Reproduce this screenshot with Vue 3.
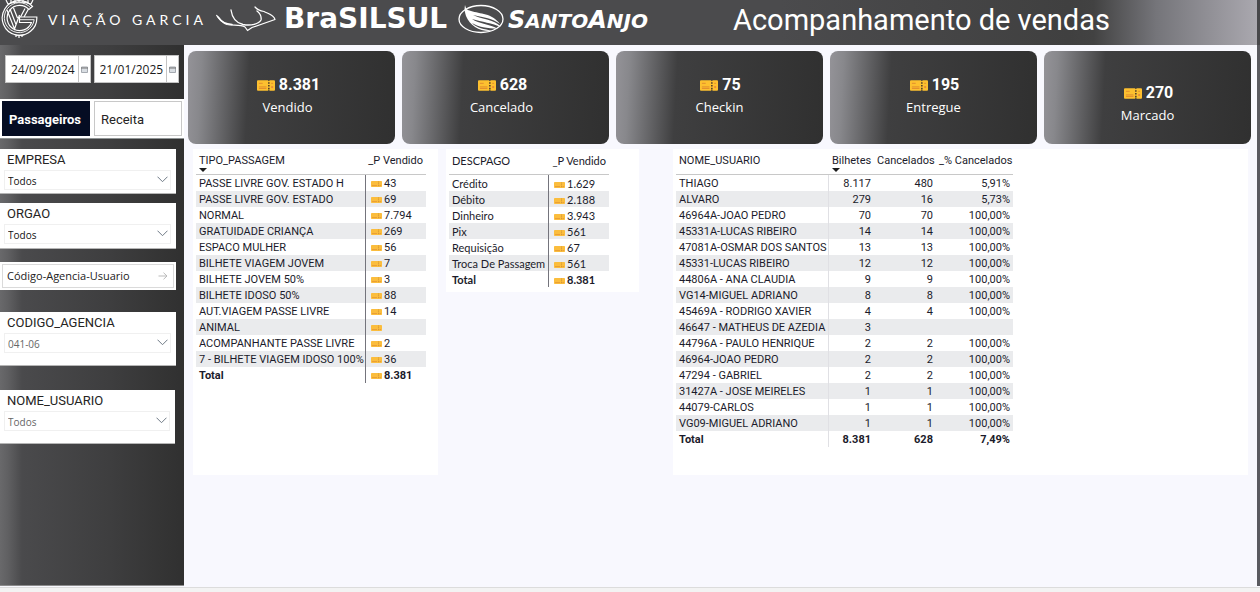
<script setup>
import { ref, h } from 'vue'

const startDate = ref('24/09/2024')
const endDate = ref('21/01/2025')
const metric = ref('Passageiros')
const metrics = ['Passageiros', 'Receita']

const filters = ref([
  { id: 'empresa', title: 'EMPRESA', value: 'Todos', kind: 'first' },
  { id: 'orgao', title: 'ORGAO', value: 'Todos', kind: 'second' },
])
const lowerFilters = ref([
  { id: 'agencia', title: 'CODIGO_AGENCIA', value: '041-06', kind: 'agency' },
  { id: 'usuario', title: 'NOME_USUARIO', value: 'Todos', kind: 'user' },
])

const cards = [
  { label: 'Vendido', value: '8.381', kind: 'shifted' },
  { label: 'Cancelado', value: '628', kind: 'shifted' },
  { label: 'Checkin', value: '75', kind: '' },
  { label: 'Entregue', value: '195', kind: '' },
  { label: 'Marcado', value: '270', kind: 'low' },
]

const ticketTypes = [
  ['PASSE LIVRE GOV. ESTADO H', '43'],
  ['PASSE LIVRE GOV. ESTADO', '69'],
  ['NORMAL', '7.794'],
  ['GRATUIDADE CRIANÇA', '269'],
  ['ESPACO MULHER', '56'],
  ['BILHETE VIAGEM JOVEM', '7'],
  ['BILHETE JOVEM 50%', '3'],
  ['BILHETE IDOSO 50%', '88'],
  ['AUT.VIAGEM PASSE LIVRE', '14'],
  ['ANIMAL', ''],
  ['ACOMPANHANTE PASSE LIVRE', '2'],
  ['7 - BILHETE VIAGEM IDOSO 100%', '36'],
]

const payments = [
  ['Crédito', '1.629'],
  ['Débito', '2.188'],
  ['Dinheiro', '3.943'],
  ['Pix', '561'],
  ['Requisição', '67'],
  ['Troca De Passagem', '561'],
]

const users = [
  ['THIAGO', '8.117', '480', '5,91%'],
  ['ALVARO', '279', '16', '5,73%'],
  ['46964A-JOAO PEDRO', '70', '70', '100,00%'],
  ['45331A-LUCAS RIBEIRO', '14', '14', '100,00%'],
  ['47081A-OSMAR DOS SANTOS', '13', '13', '100,00%'],
  ['45331-LUCAS RIBEIRO', '12', '12', '100,00%'],
  ['44806A - ANA CLAUDIA', '9', '9', '100,00%'],
  ['VG14-MIGUEL ADRIANO', '8', '8', '100,00%'],
  ['45469A - RODRIGO XAVIER', '4', '4', '100,00%'],
  ['46647 - MATHEUS DE AZEDIA', '3', '', ''],
  ['44796A - PAULO HENRIQUE', '2', '2', '100,00%'],
  ['46964-JOAO PEDRO', '2', '2', '100,00%'],
  ['47294 - GABRIEL', '2', '2', '100,00%'],
  ['31427A - JOSE MEIRELES', '1', '1', '100,00%'],
  ['44079-CARLOS', '1', '1', '100,00%'],
  ['VG09-MIGUEL ADRIANO', '1', '1', '100,00%'],
]

const TicketIcon = () =>
  h('svg', { viewBox: '0 0 19 11', 'aria-hidden': 'true' }, [
    h('path', { d: 'M1 0H11.5L12.5 1L13.5 0H18Q19 0 19 1V10Q19 11 18 11H13.5L12.5 10L11.5 11H1Q0 11 0 10V1Q0 0 1 0Z', fill: '#fdc02f' }),
    h('path', { d: 'M2 3.2H6M2 7H10M2 8.6H10M15 3.2H17', stroke: '#e08a2e', 'stroke-width': '1', fill: 'none' }),
    h('path', { d: 'M12.5 2V10', stroke: '#4a3a28', 'stroke-width': '1.6', 'stroke-dasharray': '1.6 1.4', fill: 'none' }),
    h('circle', { cx: '16', cy: '7.2', r: '1.2', fill: '#e8893b' }),
  ])

const SmallTicket = () =>
  h('svg', { viewBox: '0 0 11 6', 'aria-hidden': 'true' }, [
    h('rect', { width: '11', height: '6', rx: '.7', fill: '#fbbd3d' }),
    h('path', { d: 'M1 4.500H6M8.500 4.500H10', stroke: '#eb9f35', fill: 'none' }),
    h('path', { d: 'M7.500 .5V5.500', stroke: '#c98a35', 'stroke-width': '.8', 'stroke-dasharray': '1 .8', fill: 'none' }),
  ])
</script>

<template>
  <div class="shell">
    <header class="topbar">
      <svg class="crest" viewBox="0 0 38 38" aria-hidden="true">
        <g fill="none" stroke="#fff">
          <path d="M32.500 6.500A17.300 17.300 0 1 0 36.800 17H19.500V22.500H31.500A12.600 12.600 0 1 1 29 9.500Z" stroke-width="1.200" />
          <path d="M30.800 8A15 15 0 1 0 34.200 19.700H20" stroke-width=".9" />
          <path d="M7 10L14.500 29L19.500 15M10 9L15.800 24M13.500 8L17.500 18M25 8.500L20.500 17M28.500 9L24 17" stroke-width="1.200" />
          <path d="M6 0L8 4M11 0V3M15 0V2M19 0V2M23 0V2M28 0V3M33 0L31 4M8 4Q19 0 31 4" stroke-width="1.200" />
          <path d="M14 34.500Q19 36 25 34.500M16 35V37M19 35.500V38M22 35V37" stroke-width="1.200" />
        </g>
      </svg>
      <span class="garcia">VIAÇÃO GARCIA</span>
      <svg class="swoosh" viewBox="0 0 60 26" aria-hidden="true">
        <g fill="none" stroke="#fff" stroke-linecap="round" stroke-linejoin="round">
          <path d="M.7 9.500C4 13 6 17 11 18.500C17 20 24 18 29 21L31.500 24.500L36 21.500L59 13.500C58 9 53 8 48 5.500Q42 4.500 39 1" stroke-width="1.200" />
          <path d="M15 4C16 11 20 17 27 18.500C35 20 43 18 45 14Q46 9 41 5" stroke-width="1.300" />
          <path d="M2 11C6 17 10 18 16 18.500" stroke-width="1.600" />
        </g>
      </svg>
      <span class="brasilsul">BraSILSUL</span>
      <svg class="wing" viewBox="0 0 46 30" aria-hidden="true">
        <ellipse cx="23" cy="15" rx="22" ry="13.500" fill="none" stroke="#fff" stroke-width="1.300" />
        <path fill="#fff" d="M7 1C8 5 9 6 13 7C22 10 34 9 42 20C34 14 24 13 15 11C22 15 36 15 43 23C34 19 24 18 14 15C21 20 32 20 40 25C29 24 20 23 14 19C18 24 27 25 34 27C22 28 12 22 8 12C7 9 6 5 7 1Z" />
      </svg>
      <span class="santoanjo"><b>S</b>anto<b>A</b>njo</span>
      <h1>Acompanhamento de vendas</h1>
    </header>

    <div class="body">
      <aside class="sidebar">
        <div class="dates">
          <div class="date">
            <input v-model="startDate" type="text" aria-label="Data inicial" />
            <button type="button" aria-label="Abrir calendário inicial">
              <svg viewBox="0 0 7 7"><path d="M.5 1H6.500V6.500H.5Z" fill="#d8dde2" stroke="#a4a9b0" /><path d="M0 2H7" stroke="#777" /></svg>
            </button>
          </div>
          <div class="date">
            <input v-model="endDate" type="text" aria-label="Data final" />
            <button type="button" aria-label="Abrir calendário final">
              <svg viewBox="0 0 7 7"><path d="M.5 1H6.500V6.500H.5Z" fill="#d8dde2" stroke="#a4a9b0" /><path d="M0 2H7" stroke="#777" /></svg>
            </button>
          </div>
        </div>

        <div class="tabs">
          <button
            v-for="m in metrics"
            :key="m"
            type="button"
            :class="{ active: metric === m }"
            :aria-pressed="metric === m"
            @click="metric = m"
          >{{ m }}</button>
        </div>

        <div v-for="f in filters" :key="f.id" class="filter" :class="f.kind">
          <label :for="f.id">{{ f.title }}</label>
          <div class="pick">
            <select :id="f.id" v-model="f.value"><option>{{ f.value }}</option></select>
            <svg viewBox="0 0 11 7" aria-hidden="true"><path d="M.5.7L5.500 5.700L10.500.7" fill="none" stroke="#6f7a86" /></svg>
          </div>
        </div>

        <div class="search">
          <input type="text" aria-label="Código-Agencia-Usuario" placeholder="Código-Agencia-Usuario" />
          <button type="button" aria-label="Pesquisar">
            <svg viewBox="0 0 10 8"><path d="M.5 4H9M5.500.7L9 4L5.500 7.300" fill="none" stroke="#bbb" /></svg>
          </button>
        </div>

        <div v-for="f in lowerFilters" :key="f.id" class="filter" :class="f.kind">
          <label :for="f.id">{{ f.title }}</label>
          <div class="pick">
            <select :id="f.id" v-model="f.value"><option>{{ f.value }}</option></select>
            <svg viewBox="0 0 11 7" aria-hidden="true"><path d="M.5.7L5.500 5.700L10.500.7" fill="none" stroke="#6f7a86" /></svg>
          </div>
        </div>
      </aside>

      <main>
        <section class="cards">
          <article v-for="c in cards" :key="c.label" class="card" :class="c.kind">
            <div class="value"><TicketIcon class="ticket-lg" />{{ c.value }}</div>
            <div class="label">{{ c.label }}</div>
          </article>
        </section>

        <section class="panels">
          <div class="panel types">
            <table class="pair">
              <thead>
                <tr>
                  <th scope="col" aria-sort="descending">TIPO_PASSAGEM<svg class="sort" viewBox="0 0 8 4"><path d="M0 0H8L4 4Z" /></svg></th>
                  <th scope="col">_P Vendido</th>
                </tr>
              </thead>
              <tbody>
                <tr v-for="r in ticketTypes" :key="r[0]">
                  <td>{{ r[0] }}</td>
                  <td><SmallTicket class="ticket-sm" />{{ r[1] }}</td>
                </tr>
              </tbody>
              <tfoot>
                <tr><td>Total</td><td><SmallTicket class="ticket-sm" />8.381</td></tr>
              </tfoot>
            </table>
          </div>

          <div class="panel payments">
            <table class="pair">
              <thead>
                <tr><th scope="col">DESCPAGO</th><th scope="col">_P Vendido</th></tr>
              </thead>
              <tbody>
                <tr v-for="r in payments" :key="r[0]">
                  <td>{{ r[0] }}</td>
                  <td><SmallTicket class="ticket-sm" />{{ r[1] }}</td>
                </tr>
              </tbody>
              <tfoot>
                <tr><td>Total</td><td><SmallTicket class="ticket-sm" />8.381</td></tr>
              </tfoot>
            </table>
          </div>

          <div class="panel users">
            <table class="people">
              <thead>
                <tr>
                  <th scope="col">NOME_USUARIO</th>
                  <th scope="col" aria-sort="descending">Bilhetes<svg class="sort" viewBox="0 0 8 4"><path d="M0 0H8L4 4Z" /></svg></th>
                  <th scope="col">Cancelados</th>
                  <th scope="col">_% Cancelados</th>
                </tr>
              </thead>
              <tbody>
                <tr v-for="r in users" :key="r[0]">
                  <td v-for="(cell, i) in r" :key="i">{{ cell }}</td>
                </tr>
              </tbody>
              <tfoot>
                <tr><td>Total</td><td>8.381</td><td>628</td><td>7,49%</td></tr>
              </tfoot>
            </table>
          </div>
        </section>
      </main>
    </div>
    <footer class="statusbar"></footer>
  </div>
</template>

<style>
html,
body,
#app {
  height: 100%;
}
body {
  margin: 0;
}
</style>

<style scoped>
* {
  box-sizing: border-box;
}
.shell {
  min-height: 100%;
  display: flex;
  flex-direction: column;
  font-family: "Open Sans", "Noto Sans", sans-serif;
  font-size: 11px;
  color: #1b1b2b;
  background: #f8f8fe;
}
button,
input,
select {
  font: inherit;
  margin: 0;
  border-radius: 0;
}
svg {
  display: block;
  flex: none;
}

/* Header */
.topbar {
  display: flex;
  height: 45px;
  padding-bottom: 7px;
  align-items: center;
  color: #fff;
  white-space: nowrap;
  border-right: 3px solid #47474a;
  background: linear-gradient(90deg, #4b4b4d 0%, #4b4b4d 62%, #404040 85%, #424242 87%, #75757a 92%, #aaa8af 100%);
}
.crest {
  width: 38px;
  height: 38px;
}
.garcia {
  width: 168px;
  margin-left: 10px;
  font-family: Lato, sans-serif;
  font-size: 14px;
  letter-spacing: 4px;
}
.swoosh {
  width: 60px;
  height: 26px;
}
.brasilsul {
  width: 174px;
  margin-left: 8px;
  font: 700 28px/30px "DejaVu Sans", sans-serif;
}
.wing {
  width: 46px;
  height: 30px;
}
.santoanjo {
  width: 225px;
  margin-left: 4px;
  padding-top: 2px;
  font: italic 700 20px/30px "DejaVu Sans", sans-serif;
  text-transform: uppercase;
}
.santoanjo b {
  font-size: 24px;
}
h1 {
  margin: 0;
  padding-top: 2px;
  font: 400 29px/38px Roboto, sans-serif;
}

/* Body */
.body {
  flex: 1;
  display: flex;
  border-right: 3px solid #5a5a60;
}
.sidebar {
  width: 184px;
  flex: none;
  padding-top: 10px;
  border-bottom: 1px solid #8c8c8c;
  background: linear-gradient(90deg, #69696b 0, #606062 8px, #4a4a4c 22px, #3e3e3f 110px, #303030 100%);
}
.dates {
  display: flex;
  gap: 3px;
  padding: 0 5px;
}
.date {
  flex: 1;
  min-width: 0;
  display: flex;
  height: 28px;
  background: #fff;
  border: 1px solid #c4c4c4;
}
.date input {
  flex: 1;
  min-width: 0;
  padding: 0 0 0 5px;
  border: 0;
  background: none;
  font-size: 12px;
  color: #1b1b1b;
}
.date button {
  width: 12px;
  padding: 0 2px;
  border: 0;
  border-left: 1px solid #c4c4c4;
  background: none;
}
.date svg {
  width: 7px;
  height: 7px;
}
.tabs {
  display: flex;
  gap: 4px;
  margin-top: 16px;
  padding: 2px;
  background: #fff;
  border-bottom: 1px solid #8f9495;
}
.tabs button {
  flex: 1;
  height: 35px;
  padding: 2px 6px 0;
  text-align: left;
  border: 1px solid #c8c8c8;
  background: #fff;
  color: #252423;
  font: 400 13px/16px Roboto, sans-serif;
}
.tabs .active {
  background: #050d23;
  border-color: #050d23;
  color: #fff;
  font-weight: 700;
}
.filter {
  width: 176px;
  padding: 2px 5px 0 4px;
  background: #fff;
  border-bottom: 1px solid #b5b5b5;
}
.first {
  height: 45px;
  margin-top: 10px;
}
.second {
  height: 46px;
  margin-top: 9px;
}
.agency {
  height: 54px;
  margin-top: 22px;
}
.user {
  width: 175px;
  height: 54px;
  margin-top: 24px;
}
.filter label {
  display: block;
  padding-left: 3px;
  font: 400 13px/18px Roboto, sans-serif;
  color: #252423;
}
.pick {
  position: relative;
  margin-top: 1px;
}
.pick select {
  display: block;
  appearance: none;
  width: 100%;
  height: 20px;
  padding: 2px 20px 0 3px;
  border: 1px solid #f0f0f0;
  background: #fff;
  font-size: 10px;
  color: #111;
}
.agency select,
.user select {
  color: #666;
}
.pick svg {
  position: absolute;
  right: 3px;
  top: 6px;
  width: 11px;
  height: 7px;
  pointer-events: none;
}
.search {
  display: flex;
  width: 176px;
  height: 28px;
  margin-top: 13px;
  border: 2px solid #fff;
  background: #fff;
  box-shadow: inset 0 0 0 1px #dadada;
}
.search input {
  flex: 1;
  min-width: 0;
  padding: 0 0 2px 5px;
  border: 0;
  background: none;
}
.search input::placeholder {
  color: #222;
  opacity: 1;
}
.search button {
  width: 22px;
  padding: 0 6px;
  border: 0;
  background: none;
}
.search svg {
  width: 10px;
  height: 8px;
}

/* Cards */
main {
  flex: 1;
  min-width: 0;
}
.cards {
  display: grid;
  grid-template-columns: repeat(5, 1fr);
  gap: 7px;
  padding: 6px 6px 0 4px;
}
.card {
  height: 93px;
  padding-top: 20px;
  border-radius: 8px;
  text-align: center;
  color: #fff;
  background: linear-gradient(93deg, #949398 0, #88888c 14px, #3f3f40 62px, #303030 100%);
}
.shifted {
  padding-right: 8px;
}
.low {
  padding-top: 28px;
}
.value {
  display: flex;
  justify-content: center;
  align-items: center;
  gap: 4px;
  padding-left: 2px;
  font: 700 16px/28px Roboto, sans-serif;
}
.ticket-lg {
  width: 18px;
  height: 11px;
}
.label {
  font-size: 13px;
  line-height: 16px;
}

/* Tables */
.panels {
  display: flex;
  align-items: flex-start;
  padding: 5px 9px 0;
}
.panel {
  padding: 3px;
  background: #fff;
}
.types {
  width: 245px;
  padding-bottom: 92px;
}
.payments {
  width: 193px;
  margin-left: 8px;
  padding-bottom: 5px;
}
.users {
  flex: 1;
  margin-left: 34px;
  padding-bottom: 28px;
}
table {
  border-collapse: separate;
  border-spacing: 0;
  table-layout: fixed;
  white-space: nowrap;
  font-family: Roboto, "Open Sans", sans-serif;
}
th,
td {
  height: 16px;
  padding: 2px 3px 0;
  line-height: 14px;
  text-align: left;
}
th {
  height: 23px;
  font-weight: 400;
  vertical-align: top;
  border-bottom: 1px solid #c8c8c8;
}
.sort {
  width: 8px;
  height: 4px;
  fill: #1b1b1b;
}
.pair {
  width: 230px;
}
.payments .pair {
  width: 160px;
  font-family: Lato, "Open Sans", sans-serif;
}
.pair th:last-child,
.pair td:last-child {
  width: 60px;
}
.pair th:last-child {
  padding-left: 0;
  text-align: right;
}
.pair td:first-child {
  border-right: 1px solid #74747c;
}
.pair td:last-child {
  padding-left: 5px;
}
tbody tr:nth-child(even) td {
  background: #eaebed;
}
tfoot td {
  font-weight: 700;
}
.ticket-sm {
  display: inline-block;
  width: 11px;
  height: 6px;
  margin-right: 2px;
}
.people {
  width: 337px;
}
.people th:nth-child(2) {
  width: 45px;
}
.people th:nth-child(3) {
  width: 62px;
}
.people th:nth-child(4) {
  width: 77px;
}
.people td:first-child {
  border-right: 1px solid #e0e0e4;
}
.people td:not(:first-child),
.people th:not(:first-child) {
  text-align: right;
}
.statusbar {
  height: 5px;
  margin-top: 1px;
  background: #f3f3f3;
  border-top: 1px solid #dcdcdc;
}
</style>
